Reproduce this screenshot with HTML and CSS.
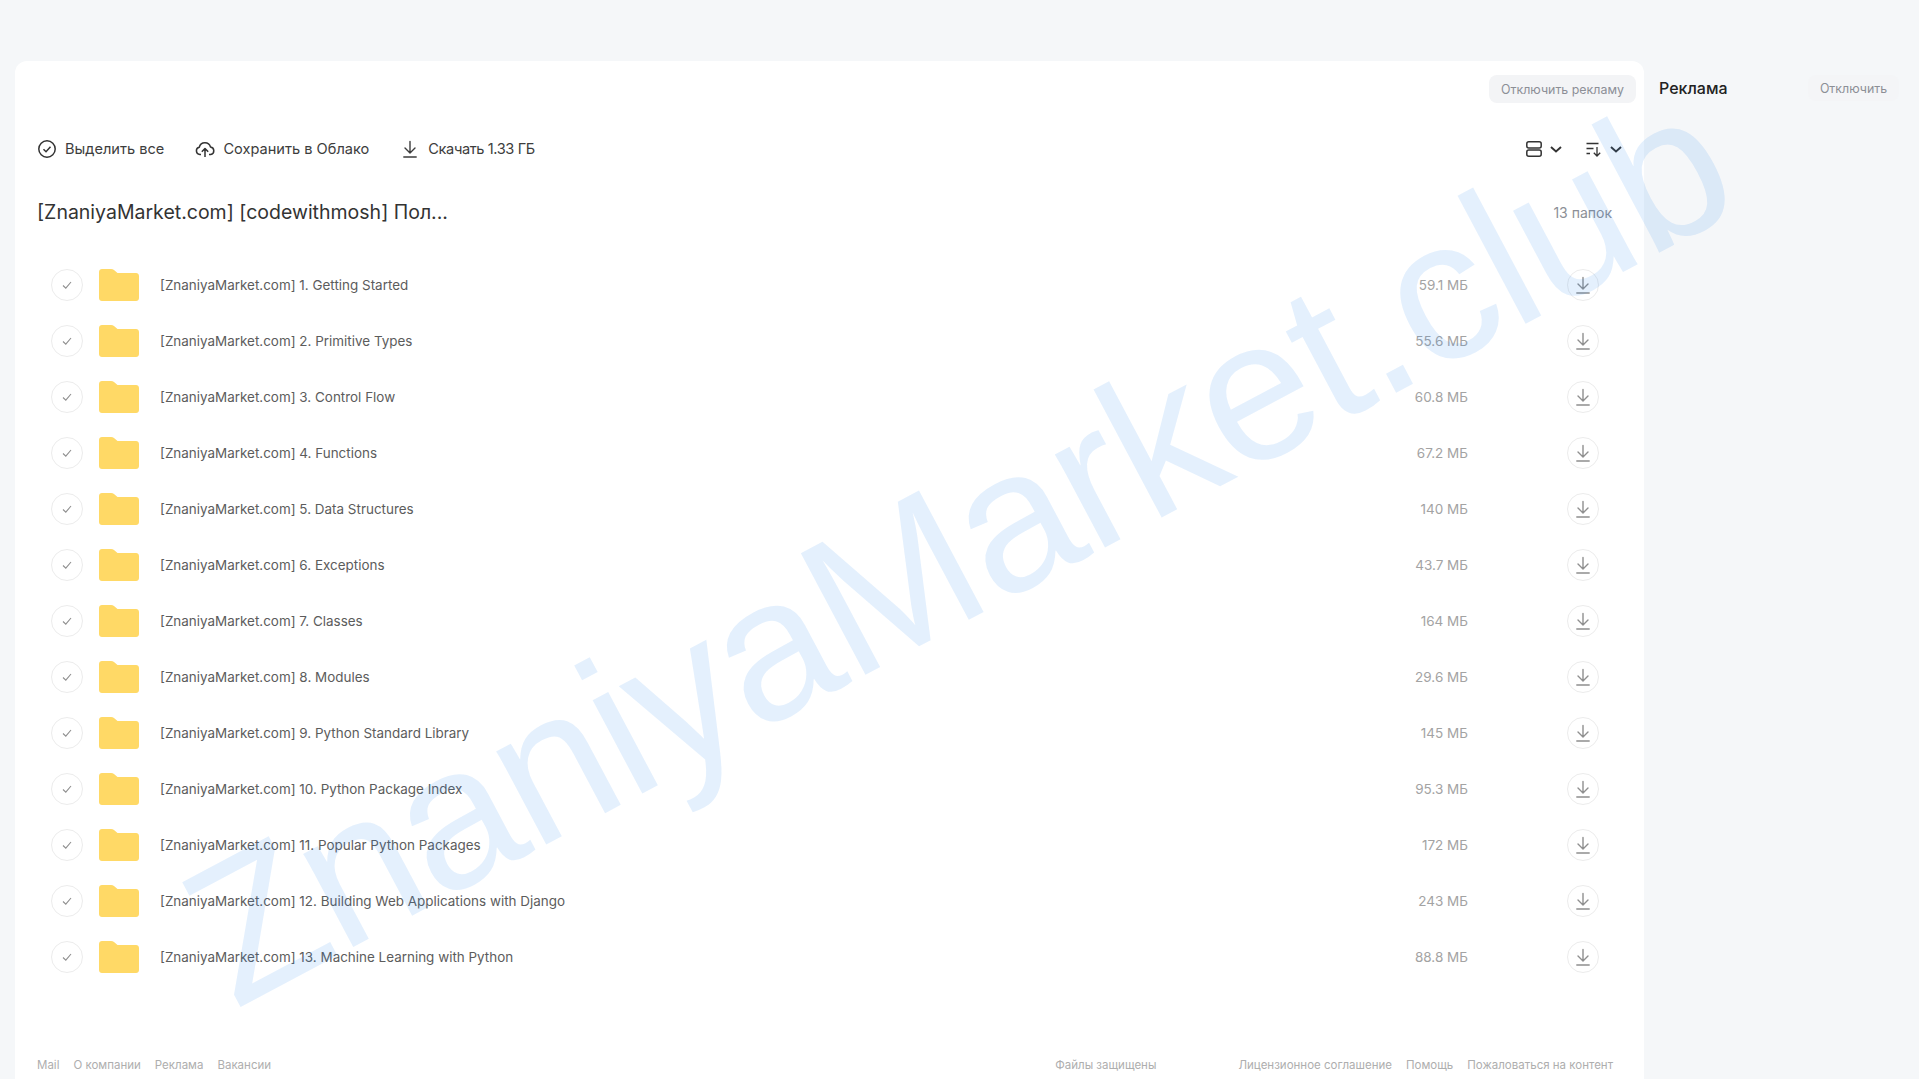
FILE: index.html
```html
<!doctype html>
<html lang="ru">
<head>
<meta charset="utf-8">
<meta name="viewport" content="width=device-width">
<title>Облако</title>
<link rel="stylesheet" href="styles.css">
</head>
<body>
<svg class="defs" width="0" height="0">
  <symbol id="dl" viewBox="0 0 20 20"><path d="M10 2.500v11M5 9l5 5 5-5M3.800 18h12.400" fill="none" stroke="currentColor" stroke-width="1.400" stroke-linecap="round" stroke-linejoin="round"/></symbol>
  <symbol id="fld" viewBox="0 0 40 32"><path d="M3 0h9c1.200 0 2.200.4 3 1.100L18.500 4H37c1.700 0 3 1.300 3 3v22c0 1.700-1.300 3-3 3H3c-1.700 0-3-1.300-3-3V3c0-1.700 1.300-3 3-3z" fill="#ffd966"/></symbol>
  <symbol id="chk" viewBox="0 0 12 12"><path d="M2 6.500l2.800 2.700L10 3" fill="none" stroke="#8f8f8f" stroke-width="1.100"/></symbol>
</svg>
<div class="page">
  <main class="card">
    <div class="adline"><a class="adoff">Отключить рекламу</a></div>
    <div class="toolbar">
      <a class="tool"><svg class="ic" viewBox="0 0 20 20"><circle cx="10" cy="10" r="8.200" fill="none" stroke="#333" stroke-width="1.500"/><path d="M6.500 10.300l2.500 2.400 4.500-5" fill="none" stroke="#333" stroke-width="1.500"/></svg>Выделить все</a>
      <a class="tool"><svg class="ic" viewBox="0 0 20 20"><path d="M6 15.500H4.800A3.700 3.700 0 0 1 4.300 8.200 5.800 5.800 0 0 1 15.500 8a3.800 3.800 0 0 1 .2 7.500H14M10 18v-8M6.800 12.800L10 9.500l3.200 3.300" fill="none" stroke="#333" stroke-width="1.500" stroke-linejoin="round"/></svg>Сохранить в Облако</a>
      <a class="tool tight"><svg class="ic"><use href="#dl"/></svg>Скачать 1.33 ГБ</a>
      <div class="views">
        <a class="view"><svg class="ic" viewBox="0 0 16 16"><rect x=".8" y=".8" width="14.400" height="6.200" rx="2" fill="none" stroke="#333" stroke-width="1.500"/><rect x=".8" y="9" width="14.400" height="6.200" rx="2" fill="none" stroke="#333" stroke-width="1.500"/></svg><svg class="caret" viewBox="0 0 12 7"><path d="M1 1l5 4.500L11 1" fill="none" stroke="#333" stroke-width="1.900"/></svg></a>
        <a class="view"><svg class="ic" viewBox="0 0 16 16"><path d="M.5 2.500h12M.5 7.500h7M.5 12.500h3.500M11 6v9M7.800 11.800l3.200 3.200 3.200-3.200" fill="none" stroke="#333" stroke-width="1.300"/></svg><svg class="caret" viewBox="0 0 12 7"><path d="M1 1l5 4.500L11 1" fill="none" stroke="#333" stroke-width="1.900"/></svg></a>
      </div>
    </div>
    <div class="head">
      <h1>[ZnaniyaMarket.com] [codewithmosh] Пол...</h1>
      <span class="count">13 папок</span>
    </div>
    <div class="list">
      <div class="row"><span class="sel"><svg><use href="#chk"/></svg></span><svg class="folder"><use href="#fld"/></svg><span class="name">[ZnaniyaMarket.com] 1. Getting Started</span><span class="size">59.1 МБ</span><span class="get"><svg><use href="#dl"/></svg></span></div>
      <div class="row"><span class="sel"><svg><use href="#chk"/></svg></span><svg class="folder"><use href="#fld"/></svg><span class="name">[ZnaniyaMarket.com] 2. Primitive Types</span><span class="size">55.6 МБ</span><span class="get"><svg><use href="#dl"/></svg></span></div>
      <div class="row"><span class="sel"><svg><use href="#chk"/></svg></span><svg class="folder"><use href="#fld"/></svg><span class="name">[ZnaniyaMarket.com] 3. Control Flow</span><span class="size">60.8 МБ</span><span class="get"><svg><use href="#dl"/></svg></span></div>
      <div class="row"><span class="sel"><svg><use href="#chk"/></svg></span><svg class="folder"><use href="#fld"/></svg><span class="name">[ZnaniyaMarket.com] 4. Functions</span><span class="size">67.2 МБ</span><span class="get"><svg><use href="#dl"/></svg></span></div>
      <div class="row"><span class="sel"><svg><use href="#chk"/></svg></span><svg class="folder"><use href="#fld"/></svg><span class="name">[ZnaniyaMarket.com] 5. Data Structures</span><span class="size">140 МБ</span><span class="get"><svg><use href="#dl"/></svg></span></div>
      <div class="row"><span class="sel"><svg><use href="#chk"/></svg></span><svg class="folder"><use href="#fld"/></svg><span class="name">[ZnaniyaMarket.com] 6. Exceptions</span><span class="size">43.7 МБ</span><span class="get"><svg><use href="#dl"/></svg></span></div>
      <div class="row"><span class="sel"><svg><use href="#chk"/></svg></span><svg class="folder"><use href="#fld"/></svg><span class="name">[ZnaniyaMarket.com] 7. Classes</span><span class="size">164 МБ</span><span class="get"><svg><use href="#dl"/></svg></span></div>
      <div class="row"><span class="sel"><svg><use href="#chk"/></svg></span><svg class="folder"><use href="#fld"/></svg><span class="name">[ZnaniyaMarket.com] 8. Modules</span><span class="size">29.6 МБ</span><span class="get"><svg><use href="#dl"/></svg></span></div>
      <div class="row"><span class="sel"><svg><use href="#chk"/></svg></span><svg class="folder"><use href="#fld"/></svg><span class="name">[ZnaniyaMarket.com] 9. Python Standard Library</span><span class="size">145 МБ</span><span class="get"><svg><use href="#dl"/></svg></span></div>
      <div class="row"><span class="sel"><svg><use href="#chk"/></svg></span><svg class="folder"><use href="#fld"/></svg><span class="name">[ZnaniyaMarket.com] 10. Python Package Index</span><span class="size">95.3 МБ</span><span class="get"><svg><use href="#dl"/></svg></span></div>
      <div class="row"><span class="sel"><svg><use href="#chk"/></svg></span><svg class="folder"><use href="#fld"/></svg><span class="name">[ZnaniyaMarket.com] 11. Popular Python Packages</span><span class="size">172 МБ</span><span class="get"><svg><use href="#dl"/></svg></span></div>
      <div class="row"><span class="sel"><svg><use href="#chk"/></svg></span><svg class="folder"><use href="#fld"/></svg><span class="name">[ZnaniyaMarket.com] 12. Building Web Applications with Django</span><span class="size">243 МБ</span><span class="get"><svg><use href="#dl"/></svg></span></div>
      <div class="row"><span class="sel"><svg><use href="#chk"/></svg></span><svg class="folder"><use href="#fld"/></svg><span class="name">[ZnaniyaMarket.com] 13. Machine Learning with Python</span><span class="size">88.8 МБ</span><span class="get"><svg><use href="#dl"/></svg></span></div>
    </div>
    <footer class="foot">
      <div class="links"><a>Mail</a><a>О компании</a><a>Реклама</a><a>Вакансии</a></div>
      <div class="links wide">
        <span class="safe">Файлы защищены</span>
        <div class="links"><a>Лицензионное соглашение</a><a>Помощь</a><a>Пожаловаться на контент</a></div>
      </div>
    </footer>
  </main>
  <aside class="side">
    <span class="side-title">Реклама</span>
    <a class="side-off">Отключить</a>
  </aside>
</div>
<div class="mark">ZnaniyaMarket.club</div>
</body>
</html>
```

FILE: styles.css
```css
*{box-sizing:border-box}
html,body{height:100%}
body{margin:0; background:#f5f7f9; color:#333; font:14px Inter,"Liberation Sans",sans-serif; overflow:hidden}
.defs{position:absolute}
.page{display:flex; padding:61px 0 0 15px; height:1079px}
.card{width:1629px; height:1018px; background:#fff; border-radius:12px 12px 0 0; padding:14px 8px 0 0; display:flex; flex-direction:column}

.adline{display:flex; justify-content:flex-end; height:28px}
.adoff{background:#f3f4f6; border-radius:8px; width:147px; display:flex; align-items:center; justify-content:center; font-size:12.400px; color:#8c8f96}

.toolbar{display:flex; align-items:center; height:32px; margin-top:30px; padding-left:22px; padding-right:14px; font-size:14.600px}
.tool{display:flex; align-items:center; gap:8px; margin-right:31px; color:#3d3d3d}
.tight{letter-spacing:-.4px}
.ic{width:20px; height:20px; flex:none}
.views{margin-left:auto; display:flex; gap:24px}
.view{display:flex; align-items:center; gap:8px}
.view .ic{width:16px; height:16px}
.caret{width:12px; height:7px}

.head{display:flex; align-items:center; justify-content:space-between; padding:0 24px 0 22px; margin-top:31px; height:32px}
h1{margin:0; font-size:19.500px; font-weight:400; color:#333}
.count{font-size:14px; color:#8c8f96}

.list{margin-top:29px}
.row{display:flex; align-items:center; height:56px; padding-left:36px}
.sel{width:32px; height:32px; border:1px solid #ececec; border-radius:50%; display:flex; align-items:center; justify-content:center; flex:none}
.sel svg{width:12px; height:12px}
.folder{width:40px; height:32px; margin-left:16px; flex:none}
.name{margin-left:21px; flex:1; font-size:13.450px; color:#5c5c5c}
.size{font-size:13.500px; color:#a3a3a3; text-align:right}
.get{width:32px; height:32px; margin:0 37px 0 99px; border:1px solid #ececec; border-radius:50%; display:flex; align-items:center; justify-content:center; color:#8f8f8f; flex:none}
.get svg{width:20px; height:20px}

.foot{margin-top:auto; height:28px; display:flex; align-items:center; justify-content:space-between; padding:0 23px 0 22px; font-size:11.500px; color:#aeaeae}
.links{display:flex; gap:14px}
.wide{gap:82px}

.side{flex:1; display:flex; justify-content:space-between; align-items:flex-start; padding:14px 20px 0 15px}
.side-title{font-size:16px; font-weight:500; color:#222; line-height:26px}
.side-off{width:91px; height:26px; background:#f4f5f7; border-radius:8px; display:flex; align-items:center; justify-content:center; font-size:12.400px; color:#8c8f96}

.mark{position:absolute; left:235px; top:841px; font:200px/1 "Liberation Sans",sans-serif; letter-spacing:-2px; white-space:nowrap; color:rgba(33,130,240,.12); transform-origin:0 169px; transform:rotate(-28deg); pointer-events:none}
```
